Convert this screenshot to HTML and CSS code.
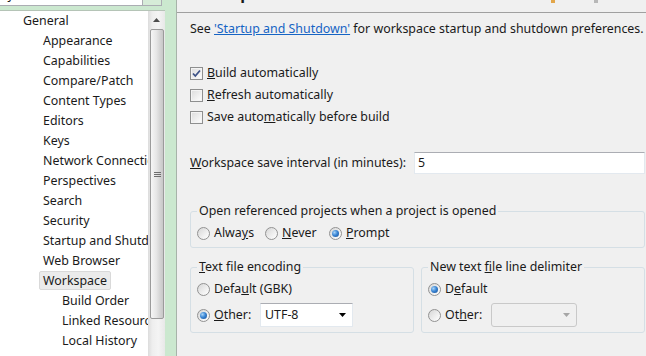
FILE: index.html
```html
<!DOCTYPE html>
<html lang="en">
<head>
    <meta charset="UTF-8">
    <title>Preferences - Workspace</title>
    <link rel="stylesheet" href="styles.css">
</head>
<body>
    <div class="window">
        <aside class="nav">
            <div class="filter">
                <div class="filter-input"><span>ty</span></div>
                <div class="filter-clear"></div>
            </div>
            <div class="tree-box">
                <ul class="tree">
                    <li class="lvl1">General</li>
                    <li class="lvl2">Appearance</li>
                    <li class="lvl2">Capabilities</li>
                    <li class="lvl2">Compare/Patch</li>
                    <li class="lvl2">Content Types</li>
                    <li class="lvl2">Editors</li>
                    <li class="lvl2">Keys</li>
                    <li class="lvl2">Network Connections</li>
                    <li class="lvl2">Perspectives</li>
                    <li class="lvl2">Search</li>
                    <li class="lvl2">Security</li>
                    <li class="lvl2">Startup and Shutdown</li>
                    <li class="lvl2">Web Browser</li>
                    <li class="lvl2"><span class="selected">Workspace</span></li>
                    <li class="lvl3">Build Order</li>
                    <li class="lvl3">Linked Resources</li>
                    <li class="lvl3">Local History</li>
                </ul>
                <div class="scrollbar">
                    <div class="sb-arrow">
                        <svg width="7" height="4" viewBox="0 0 7 4"><path d="M0 4 L3.5 0 L7 4 Z" fill="#4d4d4d"/></svg>
                    </div>
                    <div class="sb-thumb">
                        <svg width="7" height="7" viewBox="0 0 7 7"><path d="M0 1.5 H7 M0 3.5 H7 M0 5.5 H7" stroke="#6e6e6e" stroke-width="1"/></svg>
                    </div>
                </div>
            </div>
        </aside>

        <main class="page">
            <header class="page-head">
                <h1>Workspace</h1>
                <div class="tools">
                    <span class="tool tool-back"></span>
                    <span class="tool tool-fwd"></span>
                </div>
            </header>

            <div class="page-body">
                <p class="note">See <a href="#">'Startup and Shutdown'</a> for workspace startup and shutdown preferences.</p>

                <div class="checks">
                    <div class="check-row">
                        <span class="check">
                            <svg width="11" height="11" viewBox="0 0 11 11"><path d="M2 5.5 L4.3 8 L9 2.5" fill="none" stroke="#3d5287" stroke-width="1.8"/></svg>
                        </span>
                        <span><u>B</u>uild automatically</span>
                    </div>
                    <div class="check-row">
                        <span class="check"></span>
                        <span><u>R</u>efresh automatically</span>
                    </div>
                    <div class="check-row">
                        <span class="check"></span>
                        <span>Save auto<u>m</u>atically before build</span>
                    </div>
                </div>

                <div class="interval">
                    <label class="interval-label"><u>W</u>orkspace save interval (in minutes):</label>
                    <div class="textbox">5</div>
                </div>

                <fieldset class="group group-open">
                    <legend>Open referenced projects when a project is opened</legend>
                    <div class="radio-row">
                        <span class="opt opt-always"><span class="radio"></span><span>Alwa<u>y</u>s</span></span>
                        <span class="opt opt-never"><span class="radio"></span><span><u>N</u>ever</span></span>
                        <span class="opt"><span class="radio on"></span><span><u>P</u>rompt</span></span>
                    </div>
                </fieldset>

                <div class="group-pair">
                    <fieldset class="group group-small">
                        <legend><u>T</u>ext file encoding</legend>
                        <div class="opt-row">
                            <span class="opt"><span class="radio"></span><span>Defa<u>u</u>lt (GBK)</span></span>
                        </div>
                        <div class="opt-row opt-row-combo">
                            <span class="opt opt-other"><span class="radio on"></span><span><u>O</u>ther:</span></span>
                            <div class="combo">
                                <span>UTF-8</span>
                                <svg width="7" height="4" viewBox="0 0 7 4"><path d="M0 0 H7 L3.5 4 Z" fill="#000"/></svg>
                            </div>
                        </div>
                    </fieldset>

                    <fieldset class="group group-small">
                        <legend>New text <u>f</u>ile line delimiter</legend>
                        <div class="opt-row">
                            <span class="opt"><span class="radio on"></span><span>D<u>e</u>fault</span></span>
                        </div>
                        <div class="opt-row opt-row-combo">
                            <span class="opt opt-other"><span class="radio"></span><span>Ot<u>h</u>er:</span></span>
                            <div class="combo combo-disabled">
                                <span></span>
                                <svg width="7" height="4" viewBox="0 0 7 4"><path d="M0 0 H7 L3.5 4 Z" fill="#a6a6a6"/></svg>
                            </div>
                        </div>
                    </fieldset>
                </div>
            </div>
        </main>
    </div>
</body>
</html>
```

FILE: styles.css
```css
* {
    box-sizing: border-box;
}

body {
    margin: 0;
    background-color: #f0f0f0;
    font-family: "Noto Sans", "Noto Sans CJK SC", sans-serif;
    font-size: 12.4px;
    line-height: 16px;
    color: #1a1a1a;
    overflow: hidden;
}

.window {
    display: flex;
    height: 356px;
}

/* left navigation */
.nav {
    width: 177px;
    flex: none;
    display: flex;
    flex-direction: column;
    background-color: #cbe8cf;
    border-right: 1px solid #a7b3a9;
}

.filter {
    display: flex;
    height: 6px;
    margin-right: 14px;
}

.filter-input {
    flex: 1;
    background-color: #fff;
    border-bottom: 1px solid #abadb3;
    overflow: hidden;
    padding-left: 3px;
}

.filter-input span {
    display: block;
    margin-top: -13px;
    line-height: 16px;
}

.filter-clear {
    width: 20px;
    background-color: #d6ecd8;
    border-left: 1px solid #abadb3;
    border-right: 1px solid #abadb3;
    border-bottom: 1px solid #abadb3;
}

.tree-box {
    flex: 1;
    display: flex;
    margin-top: 4px;
    margin-right: 11px;
    background-color: #fff;
    border-top: 1px solid #b5c4b7;
    min-height: 0;
}

.tree {
    flex: 1;
    min-width: 0;
    list-style: none;
    margin: 0;
    padding: 0;
}

.tree li {
    height: 20px;
    line-height: 20px;
    white-space: nowrap;
    overflow: hidden;
}

.lvl1 { padding-left: 23px; }
.lvl2 { padding-left: 43px; }
.lvl3 { padding-left: 62px; }

.selected {
    display: inline-block;
    height: 19px;
    line-height: 17px;
    margin-left: -4px;
    padding: 0 3px;
    background-color: #ebebeb;
    border: 1px solid #d9d9d9;
    border-radius: 2px;
}

.scrollbar {
    width: 17px;
    flex: none;
    display: flex;
    flex-direction: column;
    align-items: center;
    background: linear-gradient(to right, #dcdcdc, #eeeeee 25%, #f4f4f4 60%, #e8e8e8);
}

.sb-arrow {
    height: 18px;
    display: flex;
    align-items: center;
    justify-content: center;
}

.sb-thumb {
    width: 14px;
    height: 290px;
    margin-left: 1px;
    display: flex;
    align-items: center;
    justify-content: center;
    border: 1px solid #9b9b9b;
    border-radius: 2px;
    background: linear-gradient(to right, #f6f6f6, #e6e6e6 45%, #d4d4d4 75%, #c8c8c8);
}

/* right page */
.page {
    flex: 1;
    min-width: 0;
    display: flex;
    flex-direction: column;
}

.page-head {
    height: 13px;
    display: flex;
    align-items: flex-end;
    padding-left: 13px;
    border-bottom: 1px solid #a0a0a0;
    overflow: hidden;
}

.page-head h1 {
    margin: 0 0 9px 0;
    font-size: 16px;
    line-height: 20px;
    font-weight: bold;
}

.tools {
    display: flex;
    gap: 39px;
    margin-left: auto;
    margin-right: 48px;
    align-self: flex-start;
}

.tool {
    width: 4px;
    height: 3px;
}

.tool-back { background-color: #e2a64a; }
.tool-fwd { background-color: #b8b8b8; }

.page-body {
    padding: 8px 1px 0 13px;
}

.note {
    margin: 0;
    white-space: nowrap;
}

.note a {
    color: #1664c4;
}

.checks {
    margin-top: 25px;
}

.check-row {
    height: 22px;
    display: flex;
    align-items: center;
    gap: 4px;
}

.check {
    width: 13px;
    height: 13px;
    flex: none;
    display: flex;
    align-items: center;
    justify-content: center;
    border: 1px solid #8e8f8f;
    background: linear-gradient(135deg, #dcdcdc, #f4f4f4 70%, #fff);
    box-shadow: inset 0 0 0 1px #f4f4f4;
}

.interval {
    margin-top: 24px;
    height: 22px;
    display: flex;
    align-items: center;
}

.interval-label {
    width: 224px;
    flex: none;
}

.textbox {
    flex: 1;
    height: 22px;
    line-height: 20px;
    padding-left: 3px;
    background-color: #fff;
    border: 1px solid #e3e9ef;
    border-top-color: #abadb3;
}

/* group boxes */
.group {
    margin: 0;
    padding: 0 6px;
    border: 1px solid #d5dfe5;
    border-radius: 3px;
}

.group legend {
    padding: 0 2px;
    line-height: 16px;
}

.group-open {
    margin-top: 29px;
    padding-top: 4px;
    padding-bottom: 4px;
}

.radio-row {
    height: 20px;
    display: flex;
    align-items: center;
}

.opt {
    display: flex;
    align-items: center;
    gap: 4px;
    white-space: nowrap;
}

.opt-always { width: 68px; }
.opt-never { width: 64px; }

.radio {
    width: 13px;
    height: 13px;
    flex: none;
    border-radius: 50%;
    border: 1px solid #929292;
    background: linear-gradient(135deg, #d6d6d6, #f2f2f2 65%, #fff);
    display: flex;
    align-items: center;
    justify-content: center;
}

.radio.on::after {
    content: "";
    width: 7px;
    height: 7px;
    border-radius: 50%;
    background: radial-gradient(circle at 35% 35%, #a8d4f8, #3b86d4 45%, #164c93);
}

.group-pair {
    margin-top: 11px;
    display: grid;
    grid-template-columns: 1fr 1fr;
    column-gap: 7px;
}

.group-small {
    padding-top: 4px;
    padding-bottom: 5px;
}

.opt-row {
    height: 20px;
    display: flex;
    align-items: center;
}

.opt-row-combo {
    height: 24px;
    margin-top: 4px;
}

.opt-other {
    width: 63px;
}

.combo {
    width: 93px;
    height: 24px;
    display: flex;
    align-items: center;
    justify-content: space-between;
    padding: 0 6px 0 4px;
    background-color: #fff;
    border: 1px solid #e3e9ef;
    border-top-color: #abadb3;
}

.combo-disabled {
    width: 86px;
    background-color: #f0f0f0;
    border: 1px solid #c9c9c9;
    border-radius: 3px;
}
```
